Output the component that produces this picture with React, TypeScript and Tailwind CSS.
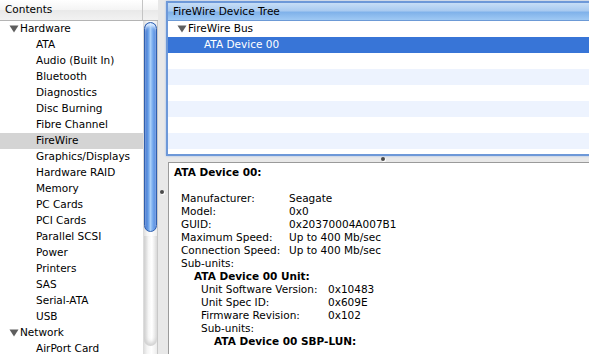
import React from 'react';

const HARDWARE = [
  'ATA',
  'Audio (Built In)',
  'Bluetooth',
  'Diagnostics',
  'Disc Burning',
  'Fibre Channel',
  'FireWire',
  'Graphics/Displays',
  'Hardware RAID',
  'Memory',
  'PC Cards',
  'PCI Cards',
  'Parallel SCSI',
  'Power',
  'Printers',
  'SAS',
  'Serial-ATA',
  'USB',
];

const NETWORK = ['AirPort Card'];

const MAIN_FIELDS = [
  ['Manufacturer:', 'Seagate'],
  ['Model:', '0x0'],
  ['GUID:', '0x20370004A007B1'],
  ['Maximum Speed:', 'Up to 400 Mb/sec'],
  ['Connection Speed:', 'Up to 400 Mb/sec'],
];

const UNIT_FIELDS = [
  ['Unit Software Version:', '0x10483'],
  ['Unit Spec ID:', '0x609E'],
  ['Firmware Revision:', '0x102'],
];

function Triangle() {
  return (
    <svg width="10" height="8" viewBox="0 0 10 8" className="shrink-0">
      <path d="M0.5 0.5H9.5L5 7.5Z" fill="#5e5e5e" />
    </svg>
  );
}

function Dimple() {
  return <div className="w-[4px] h-[4px] rounded-full bg-[#4a4a4a] shadow-[1px_1px_0_#ffffff]" />;
}

export default function App() {
  return (
    <div className="w-[589px] h-[354px] flex overflow-hidden bg-[#e8e8e8] font-['DejaVu_Sans',sans-serif] text-[10.5px] text-black">
      {/* Source list */}
      <div className="w-[158px] shrink-0 flex flex-col bg-white">
        <div className="h-[21px] shrink-0 flex border-b border-[#b4b4b4] bg-[linear-gradient(#ffffff,#f4f4f4_50%,#e9e9e9_51%,#f2f2f2)]">
          <div className="w-[143px] border-r border-[#c4c4c4] pl-[5px] flex items-center">Contents</div>
          <div className="flex-1" />
        </div>
        <div className="flex-1 flex min-h-0">
          <div className="w-[143px] overflow-hidden">
            <div className="h-[16px] flex items-center pl-[9px] gap-[1px]">
              <Triangle />
              <span>Hardware</span>
            </div>
            {HARDWARE.map((item) => (
              <div
                key={item}
                className={`h-[16px] flex items-center pl-[36px] ${item === 'FireWire' ? 'bg-[#d4d4d4]' : ''}`}
              >
                {item}
              </div>
            ))}
            <div className="h-[16px] flex items-center pl-[9px] gap-[1px]">
              <Triangle />
              <span>Network</span>
            </div>
            {NETWORK.map((item) => (
              <div key={item} className="h-[16px] flex items-center pl-[36px]">
                {item}
              </div>
            ))}
          </div>
          {/* Scrollbar */}
          <div className="w-[15px] flex flex-col items-center border-r border-[#c8c8c8] bg-[linear-gradient(to_right,#d9d9d9,#f4f4f4_30%,#ffffff_60%,#ececec)]">
            <div className="mt-[1px] w-[13px] h-[210px] rounded-full border border-[#2f5fae] bg-[linear-gradient(to_right,#2a5cbc,#5c95e4_25%,#a9cff8_50%,#6da3ec_75%,#3a70cf)] shadow-[inset_0_3px_3px_#dcecff]" />
            <div className="mt-[4px] w-[13px] h-[110px] rounded-b-full bg-[linear-gradient(to_right,#d2d2d2,#f6f6f6_35%,#ffffff_60%,#e2e2e2)] shadow-[inset_0_-3px_4px_#cfcfcf]" />
          </div>
        </div>
      </div>

      {/* Vertical splitter */}
      <div className="w-[8px] shrink-0 flex flex-col items-center pt-[190px]">
        <Dimple />
      </div>

      {/* Right side */}
      <div className="flex-1 min-w-0 flex flex-col">
        <div className="mt-[1px] h-[155px] shrink-0 -mr-[6px] flex flex-col bg-white border-2 border-[#6d98d8] shadow-[0_0_2px_#9dbbe8] overflow-hidden">
          <div className="h-[18px] shrink-0 flex items-center pl-[5px] border-b border-[#6c9ad6] bg-[linear-gradient(#c6ddf6,#a9caf0_45%,#80b2ea_55%,#9fc9f4)]">
            FireWire Device Tree
          </div>
          <div className="h-[16px] flex items-center pl-[9px] gap-[1px]">
            <Triangle />
            <span>FireWire Bus</span>
          </div>
          <div className="h-[16px] flex items-center pl-[36px] bg-[#3875d7] text-white">ATA Device 00</div>
          {[0, 1, 2, 3, 4, 5, 6].map((i) => (
            <div key={i} className={`h-[16px] shrink-0 ${i % 2 === 1 ? 'bg-[#edf3fe]' : 'bg-white'}`} />
          ))}
        </div>

        {/* Horizontal splitter */}
        <div className="h-[6px] shrink-0 flex items-start pl-[215px] pt-[1px]">
          <Dimple />
        </div>

        <div className="flex-1 ml-[2px] -mr-[6px] bg-white border-t border-l border-[#9a9a9a] pl-[5px] pt-[3px] leading-[13px] overflow-hidden">
          <div className="font-bold">ATA Device 00:</div>
          <div className="h-[13px]" />
          <div className="pl-[7px]">
            {MAIN_FIELDS.map(([k, v]) => (
              <div key={k} className="flex">
                <span className="w-[108px] shrink-0">{k}</span>
                <span>{v}</span>
              </div>
            ))}
            <div>Sub-units:</div>
            <div className="pl-[13px] font-bold">ATA Device 00 Unit:</div>
            <div className="pl-[20px]">
              {UNIT_FIELDS.map(([k, v]) => (
                <div key={k} className="flex">
                  <span className="w-[127px] shrink-0">{k}</span>
                  <span>{v}</span>
                </div>
              ))}
              <div>Sub-units:</div>
              <div className="pl-[13px] font-bold">ATA Device 00 SBP-LUN:</div>
            </div>
          </div>
        </div>
      </div>
    </div>
  );
}
